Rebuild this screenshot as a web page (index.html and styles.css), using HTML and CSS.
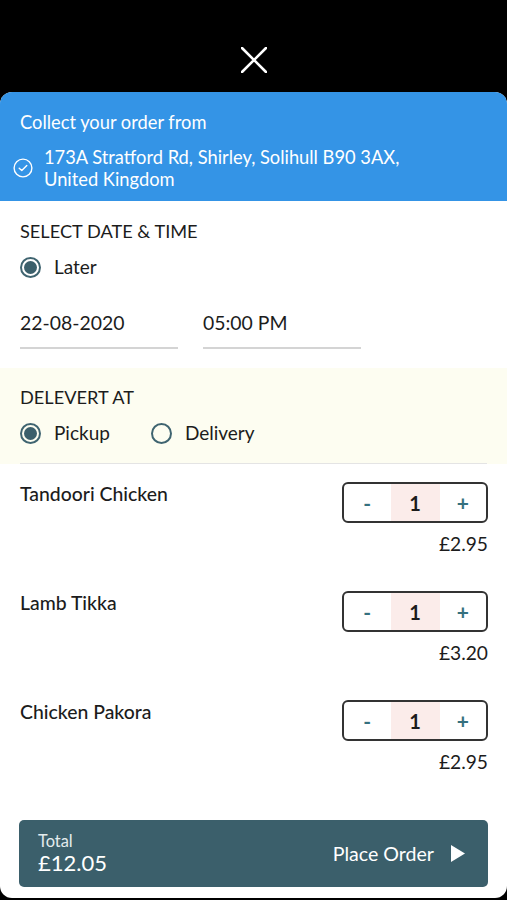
FILE: index.html
```html
<!DOCTYPE html>
<html lang="en">
<head>
    <meta charset="UTF-8">
    <meta name="viewport" content="width=device-width, initial-scale=1.0">
    <title>Checkout</title>
    <link rel="stylesheet" href="styles.css">
</head>
<body>
    <div class="top-bar">
        <svg class="close-icon" width="26" height="26" viewBox="0 0 26 26">
            <path d="M1 1 L25 25 M25 1 L1 25" stroke="#fff" stroke-width="2.6" stroke-linecap="round"/>
        </svg>
    </div>

    <div class="sheet">
        <div class="collect">
            <div class="collect-title">Collect your order from</div>
            <div class="address">
                <svg class="check-icon" width="20" height="20" viewBox="0 0 20 20">
                    <circle cx="10" cy="10" r="8.9" fill="none" stroke="#fff" stroke-width="1.4"/>
                    <path d="M6.2 10.2 L8.8 12.6 L13.8 7.6" fill="none" stroke="#fff" stroke-width="1.4" stroke-linecap="round" stroke-linejoin="round"/>
                </svg>
                <span class="address-text">173A Stratford Rd, Shirley, Solihull B90 3AX, United Kingdom</span>
            </div>
        </div>

        <div class="section">
            <div class="section-title">SELECT DATE &amp; TIME</div>
            <div class="radio-row">
                <label class="radio"><span class="dot checked"></span>Later</label>
            </div>
            <div class="date-row">
                <div class="field">22-08-2020</div>
                <div class="field">05:00 PM</div>
            </div>
        </div>

        <div class="section cream">
            <div class="section-title">DELEVERT AT</div>
            <div class="radio-row">
                <label class="radio"><span class="dot checked"></span>Pickup</label>
                <label class="radio"><span class="dot"></span>Delivery</label>
            </div>
            <div class="divider"></div>
        </div>

        <div class="items">
            <div class="item">
                <div class="item-name">Tandoori Chicken</div>
                <div class="item-right">
                    <div class="qty">
                        <span class="qty-btn">-</span>
                        <span class="qty-num">1</span>
                        <span class="qty-btn">+</span>
                    </div>
                    <div class="price">£2.95</div>
                </div>
            </div>
            <div class="item">
                <div class="item-name">Lamb Tikka</div>
                <div class="item-right">
                    <div class="qty">
                        <span class="qty-btn">-</span>
                        <span class="qty-num">1</span>
                        <span class="qty-btn">+</span>
                    </div>
                    <div class="price">£3.20</div>
                </div>
            </div>
            <div class="item">
                <div class="item-name">Chicken Pakora</div>
                <div class="item-right">
                    <div class="qty">
                        <span class="qty-btn">-</span>
                        <span class="qty-num">1</span>
                        <span class="qty-btn">+</span>
                    </div>
                    <div class="price">£2.95</div>
                </div>
            </div>
        </div>

        <div class="order-bar">
            <div class="total">
                <div class="total-label">Total</div>
                <div class="total-value">£12.05</div>
            </div>
            <div class="place">
                Place Order
                <svg width="14" height="17" viewBox="0 0 14 17">
                    <path d="M0 0 L14 8.5 L0 17 Z" fill="#fff"/>
                </svg>
            </div>
        </div>
    </div>
</body>
</html>
```

FILE: styles.css
```css
body {
    margin: 0;
    background-color: #000;
    font-family: Lato, "Open Sans", Arial, sans-serif;
    color: #1c1c1c;
}
.top-bar {
    height: 92px;
    display: flex;
    align-items: center;
    justify-content: center;
}
.close-icon {
    margin-top: 27px;
}
.sheet {
    background-color: white;
    border-radius: 12px;
    height: 806px;
    overflow: hidden;
    display: flex;
    flex-direction: column;
}
.collect {
    background-color: #3494e6;
    color: white;
    padding: 19px 20px 11px;
    font-size: 18.3px;
    line-height: 22px;
}
.address {
    display: flex;
    align-items: center;
    gap: 11px;
    margin-top: 13px;
    margin-left: -7px;
}
.address-text {
    max-width: 380px;
}
.section {
    padding: 19px 20px 19px;
}
.section-title {
    font-size: 18.2px;
    line-height: 22px;
}
.radio-row {
    display: flex;
    gap: 41px;
    margin-top: 13px;
}
.radio {
    display: flex;
    align-items: center;
    gap: 13px;
    font-size: 19px;
    line-height: 24px;
}
.dot {
    width: 17px;
    height: 17px;
    border: 2px solid #3f6470;
    border-radius: 50%;
    display: flex;
    align-items: center;
    justify-content: center;
}
.dot.checked::after {
    content: "";
    width: 13px;
    height: 13px;
    border-radius: 50%;
    background-color: #3b5f6b;
}
.date-row {
    display: flex;
    gap: 25px;
    margin-top: 33px;
}
.field {
    width: 158px;
    font-size: 19.4px;
    line-height: 22px;
    padding-bottom: 13px;
    border-bottom: 2px solid #d4d4d4;
}
.cream {
    background-color: #fdfdf1;
    padding-top: 18px;
    padding-bottom: 0;
}
.divider {
    margin-top: 18px;
    border-bottom: 1px solid #e4e4e4;
}
.items {
    padding: 18px 19px 0 20px;
    display: flex;
    flex-direction: column;
    gap: 37px;
}
.item {
    display: flex;
    justify-content: space-between;
    align-items: flex-start;
}
.item-name {
    font-size: 19.4px;
    line-height: 22px;
    font-weight: 500;
    margin-top: 1px;
}
.item-right {
    display: flex;
    flex-direction: column;
    align-items: flex-end;
}
.qty {
    width: 142px;
    height: 37px;
    border: 2px solid #333;
    border-radius: 6px;
    display: flex;
    overflow: hidden;
}
.qty-btn {
    flex: 1;
    display: flex;
    align-items: center;
    justify-content: center;
    color: #35707e;
    font-size: 21px;
    font-weight: bold;
}
.qty-num {
    width: 49px;
    background-color: #fbecea;
    display: flex;
    align-items: center;
    justify-content: center;
    font-weight: bold;
    font-size: 20px;
}
.price {
    margin-top: 11px;
    font-size: 19.2px;
    line-height: 20px;
}
.order-bar {
    margin: auto 19px 11px;
    height: 67px;
    background-color: #3b5f6b;
    border-radius: 5px;
    color: white;
    display: flex;
    align-items: center;
    justify-content: space-between;
    padding: 0 23px 0 19px;
}
.total-label {
    font-size: 16.4px;
    line-height: 18px;
    color: #e4ecee;
}
.total-value {
    font-size: 22px;
    line-height: 26px;
}
.place {
    display: flex;
    align-items: center;
    gap: 17px;
    font-size: 19.6px;
}
```
